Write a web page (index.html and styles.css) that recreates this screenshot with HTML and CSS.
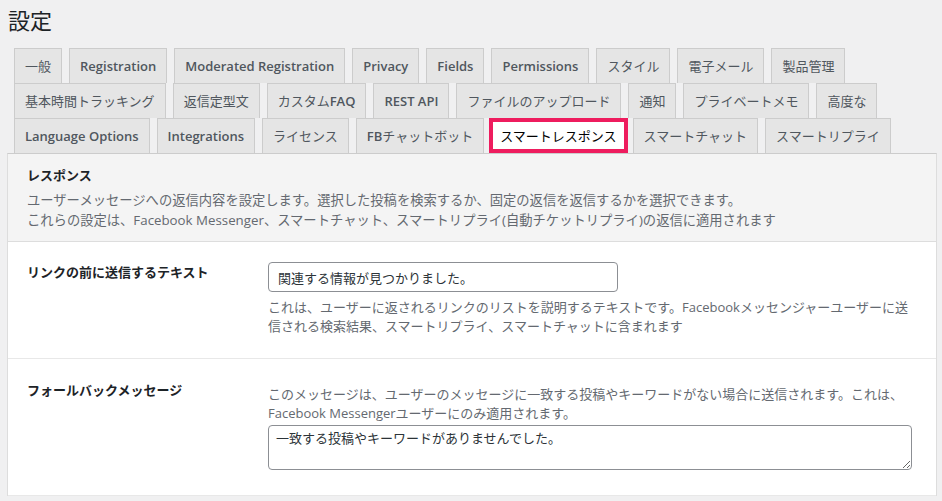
FILE: index.html
```html
<!DOCTYPE html>
<html lang="ja">
<head>
  <meta charset="UTF-8" />
  <meta name="viewport" content="width=device-width, initial-scale=1.0">
  <title>設定</title>
  <link rel="stylesheet" href="styles.css">
</head>
<body>
  <div class="wrap">
    <h1>設定</h1>

    <nav class="tabs">
      <div class="tab-row">
        <a class="tab">一般</a>
        <a class="tab en">Registration</a>
        <a class="tab en">Moderated Registration</a>
        <a class="tab en">Privacy</a>
        <a class="tab en">Fields</a>
        <a class="tab en">Permissions</a>
        <a class="tab">スタイル</a>
        <a class="tab">電子メール</a>
        <a class="tab">製品管理</a>
      </div>
      <div class="tab-row">
        <a class="tab">基本時間トラッキング</a>
        <a class="tab">返信定型文</a>
        <a class="tab">カスタム<span class="en">FAQ</span></a>
        <a class="tab en">REST API</a>
        <a class="tab">ファイルのアップロード</a>
        <a class="tab">通知</a>
        <a class="tab">プライベートメモ</a>
        <a class="tab">高度な</a>
      </div>
      <div class="tab-row">
        <a class="tab en">Language Options</a>
        <a class="tab en">Integrations</a>
        <a class="tab">ライセンス</a>
        <a class="tab"><span class="en">FB</span>チャットボット</a>
        <a class="tab active">スマートレスポンス</a>
        <a class="tab">スマートチャット</a>
        <a class="tab">スマートリプライ</a>
      </div>
    </nav>

    <div class="panel">
      <div class="panel-head">
        <h2>レスポンス</h2>
        <p>ユーザーメッセージへの返信内容を設定します。選択した投稿を検索するか、固定の返信を返信するかを選択できます。</p>
        <p>これらの設定は、Facebook Messenger、スマートチャット、スマートリプライ(自動チケットリプライ)の返信に適用されます</p>
      </div>

      <div class="form-row">
        <label class="row-label" for="linkText">リンクの前に送信するテキスト</label>
        <div class="field">
          <input type="text" id="linkText" value="関連する情報が見つかりました。" />
          <p class="description">これは、ユーザーに返されるリンクのリストを説明するテキストです。Facebookメッセンジャーユーザーに送信される検索結果、スマートリプライ、スマートチャットに含まれます</p>
        </div>
      </div>

      <div class="form-row second">
        <label class="row-label" for="fallback">フォールバックメッセージ</label>
        <div class="field">
          <p class="description top">このメッセージは、ユーザーのメッセージに一致する投稿やキーワードがない場合に送信されます。これは、Facebook Messengerユーザーにのみ適用されます。</p>
          <textarea id="fallback" rows="2">一致する投稿やキーワードがありませんでした。</textarea>
        </div>
      </div>
    </div>
  </div>
</body>
</html>
```

FILE: styles.css
```css
body {
  margin: 0;
  background-color: #f0f0f1;
  font-family: "Open Sans", "Noto Sans CJK JP", sans-serif;
  font-size: 13px;
  color: #1d2327;
}
.wrap {
  width: 930px;
  margin-left: 7px;
}
h1 {
  font-size: 22px;
  font-weight: 400;
  line-height: 28px;
  margin: 0 0 14px;
  padding: 6px 0 0 1px;
  color: #1d2327;
}
.tab-row {
  display: flex;
  height: 35px;
}
.tab {
  margin-left: 7px;
  padding: 5px 10px;
  line-height: 24px;
  border: 1px solid #ccc;
  border-bottom: none;
  background-color: #e5e5e5;
  color: #50575e;
  white-space: nowrap;
}
.tab.en,
.tab .en {
  font-weight: 600;
}
.tab.active {
  background-color: #fff;
  color: #000;
  border: 4px solid #ee1c5e;
  padding: 2px 7px 1px;
  margin-left: 5px;
  margin-right: -2px;
}
.panel {
  background-color: #fff;
  border: 1px solid #ddd;
  border-top-color: #ccc;
  border-bottom: none;
}
.panel-head {
  background-color: #f4f4f4;
  padding: 11px 20px 11px 19px;
  border-bottom: 1px solid #ddd;
}
.panel-head h2 {
  font-size: 13px;
  font-weight: 600;
  line-height: 20px;
  margin: 0 0 5px;
}
.panel-head p {
  margin: 0;
  font-size: 13.3px;
  line-height: 20px;
  color: #646970;
}
.form-row {
  display: flex;
  border-bottom: 1px solid #e8e8e8;
}
.row-label {
  width: 241px;
  padding: 20px 0 0 19px;
  font-weight: 600;
  line-height: 20px;
}
.field {
  width: 644px;
  padding: 20px 0 22px;
}
.second .row-label {
  padding-top: 21px;
}
.second .field {
  padding: 26px 0 25px;
}
input[type="text"] {
  display: block;
  box-sizing: border-box;
  width: 350px;
  height: 30px;
  padding: 0 9px;
  border: 1px solid #8c8f94;
  border-radius: 4px;
  font: inherit;
  color: #2c3338;
}
textarea {
  display: block;
  box-sizing: border-box;
  width: 644px;
  height: 45px;
  margin-top: 2px;
  padding: 2px 7px;
  border: 1px solid #8c8f94;
  border-radius: 4px;
  font: inherit;
  line-height: 20px;
  color: #2c3338;
}
.description {
  margin: 6px 0 0;
  line-height: 19px;
  color: #646970;
}
.description.top {
  margin: 0;
}
```
